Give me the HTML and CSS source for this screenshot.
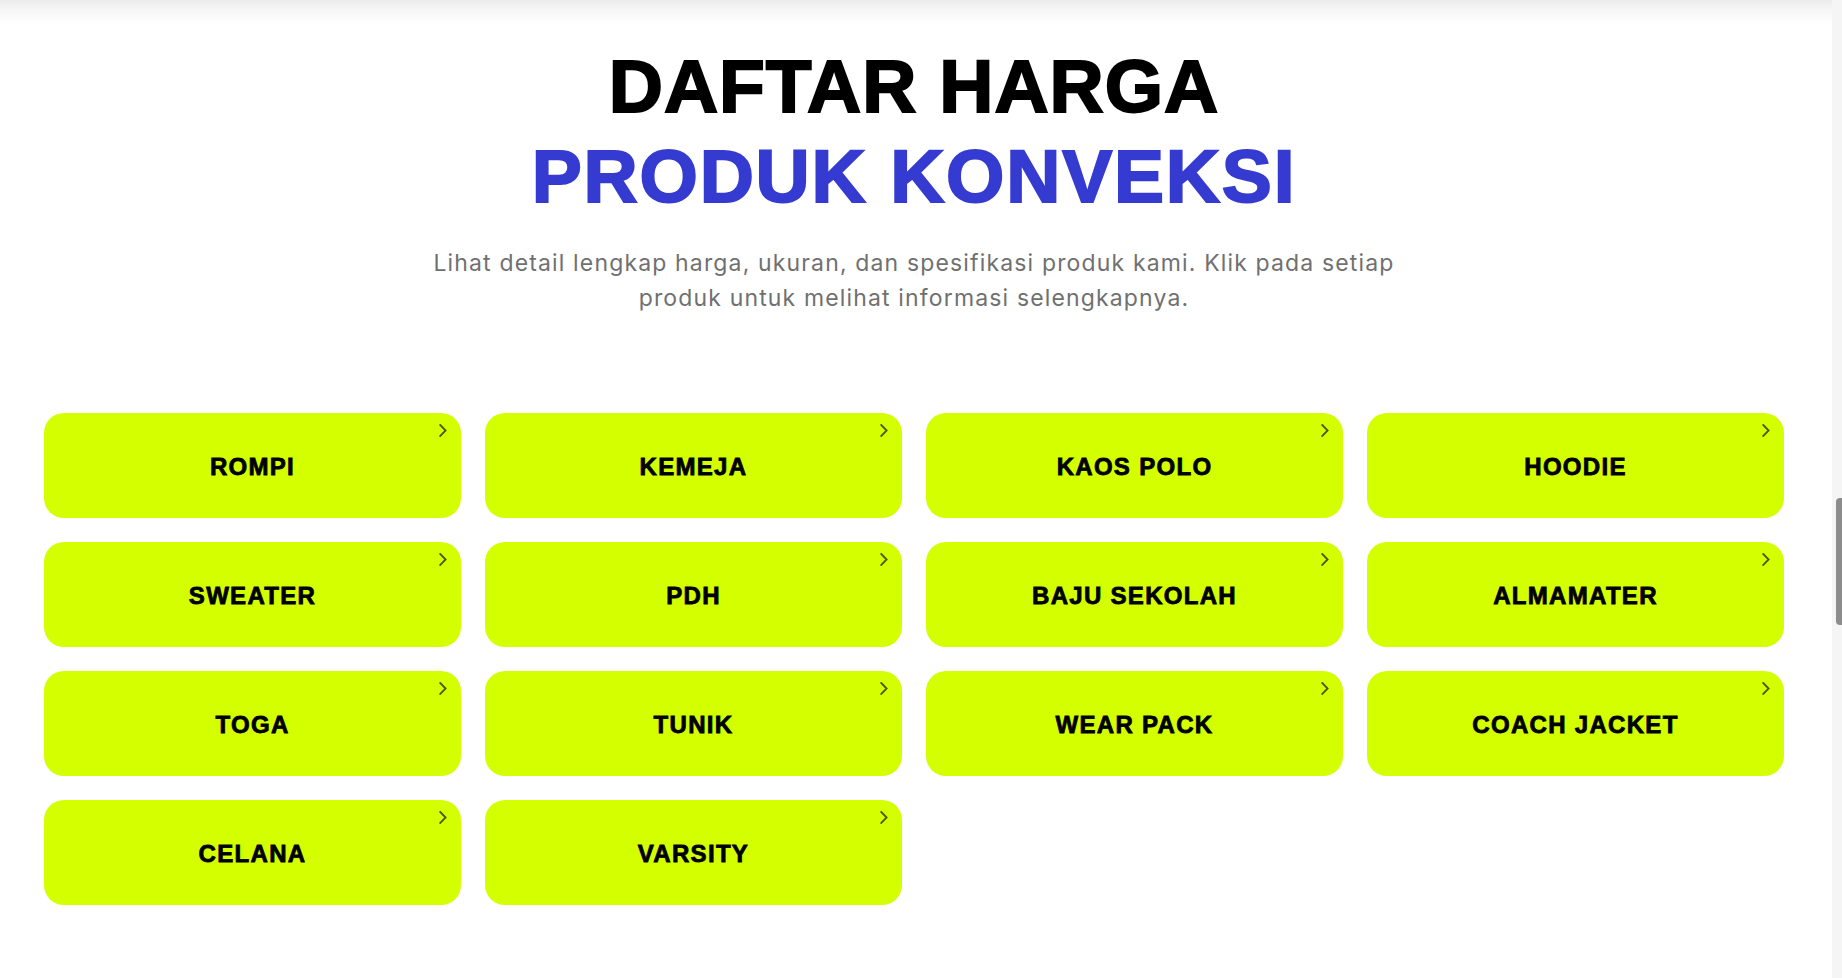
FILE: index.html
```html
<!DOCTYPE html>
<html lang="id">
<head>
<meta charset="utf-8">
<title>Daftar Harga Produk Konveksi</title>
<link rel="stylesheet" href="styles.css">
</head>
<body>
<div class="layout">
  <main class="page">
    <header class="intro">
      <h1 class="title">
        <span class="title-line">DAFTAR HARGA</span>
        <span class="title-line title-accent">PRODUK KONVEKSI</span>
      </h1>
      <p class="lead">Lihat detail lengkap harga, ukuran, dan spesifikasi produk kami. Klik pada setiap produk untuk melihat informasi selengkapnya.</p>
    </header>

    <section class="grid">
      <a class="card" href="#"><span class="card-label">ROMPI</span><svg class="chev" viewBox="0 0 8 13"><path d="M1.2 1 L6.6 6.5 L1.2 12"/></svg></a>
      <a class="card" href="#"><span class="card-label">KEMEJA</span><svg class="chev" viewBox="0 0 8 13"><path d="M1.2 1 L6.6 6.5 L1.2 12"/></svg></a>
      <a class="card" href="#"><span class="card-label">KAOS POLO</span><svg class="chev" viewBox="0 0 8 13"><path d="M1.2 1 L6.6 6.5 L1.2 12"/></svg></a>
      <a class="card" href="#"><span class="card-label">HOODIE</span><svg class="chev" viewBox="0 0 8 13"><path d="M1.2 1 L6.6 6.5 L1.2 12"/></svg></a>
      <a class="card" href="#"><span class="card-label">SWEATER</span><svg class="chev" viewBox="0 0 8 13"><path d="M1.2 1 L6.6 6.5 L1.2 12"/></svg></a>
      <a class="card" href="#"><span class="card-label">PDH</span><svg class="chev" viewBox="0 0 8 13"><path d="M1.2 1 L6.6 6.5 L1.2 12"/></svg></a>
      <a class="card" href="#"><span class="card-label">BAJU SEKOLAH</span><svg class="chev" viewBox="0 0 8 13"><path d="M1.2 1 L6.6 6.5 L1.2 12"/></svg></a>
      <a class="card" href="#"><span class="card-label">ALMAMATER</span><svg class="chev" viewBox="0 0 8 13"><path d="M1.2 1 L6.6 6.5 L1.2 12"/></svg></a>
      <a class="card" href="#"><span class="card-label">TOGA</span><svg class="chev" viewBox="0 0 8 13"><path d="M1.2 1 L6.6 6.5 L1.2 12"/></svg></a>
      <a class="card" href="#"><span class="card-label">TUNIK</span><svg class="chev" viewBox="0 0 8 13"><path d="M1.2 1 L6.6 6.5 L1.2 12"/></svg></a>
      <a class="card" href="#"><span class="card-label">WEAR PACK</span><svg class="chev" viewBox="0 0 8 13"><path d="M1.2 1 L6.6 6.5 L1.2 12"/></svg></a>
      <a class="card" href="#"><span class="card-label">COACH JACKET</span><svg class="chev" viewBox="0 0 8 13"><path d="M1.2 1 L6.6 6.5 L1.2 12"/></svg></a>
      <a class="card" href="#"><span class="card-label">CELANA</span><svg class="chev" viewBox="0 0 8 13"><path d="M1.2 1 L6.6 6.5 L1.2 12"/></svg></a>
      <a class="card" href="#"><span class="card-label">VARSITY</span><svg class="chev" viewBox="0 0 8 13"><path d="M1.2 1 L6.6 6.5 L1.2 12"/></svg></a>
    </section>
  </main>

  <aside class="scrollbar" aria-hidden="true">
    <div class="scroll-thumb"></div>
  </aside>
</div>
</body>
</html>
```

FILE: styles.css
```css
* {
  box-sizing: border-box;
}

html, body {
  margin: 0;
  padding: 0;
  height: 100%;
  overflow: hidden;
}

body {
  background: #ffffff linear-gradient(to bottom, #ebebeb 0px, #f6f6f6 10px, #ffffff 24px) no-repeat;
  font-family: "Liberation Sans", Arial, sans-serif;
  color: #000;
}

.layout {
  display: flex;
  height: 978px;
}

.page {
  flex: 1;
  padding: 41px 48px 0 44px;
}

.intro {
  display: flex;
  flex-direction: column;
  align-items: center;
  text-align: center;
}

.title {
  margin: 0;
  display: flex;
  flex-direction: column;
  align-items: center;
  font-family: "Liberation Sans", Arial, sans-serif;
  font-weight: 700;
  font-size: 75px;
  line-height: 90px;
  letter-spacing: 1px;
  color: #000;
  -webkit-text-stroke: 2px currentColor;
}

.title-accent {
  color: #353bd0;
  letter-spacing: 1.8px;
}

.lead {
  margin: 25px 0 0;
  max-width: 1000px;
  font-family: Inter, "Open Sans", sans-serif;
  font-size: 23px;
  font-weight: 400;
  line-height: 35px;
  letter-spacing: 1.15px;
  color: #707070;
}

.grid {
  margin-top: 97px;
  display: grid;
  grid-template-columns: repeat(4, 1fr);
  gap: 24px;
}

.card {
  position: relative;
  height: 105px;
  display: flex;
  align-items: center;
  justify-content: center;
  padding-top: 3px;
  background: #d4ff00;
  border-radius: 20px;
  text-decoration: none;
  color: #000;
}

.card-label {
  font-family: "Liberation Sans", Arial, sans-serif;
  font-weight: 700;
  font-size: 24px;
  letter-spacing: 1.3px;
  -webkit-text-stroke: 0.8px currentColor;
}

.chev {
  position: absolute;
  top: 11px;
  right: 14px;
  width: 8px;
  height: 13px;
  fill: none;
  stroke: #4b5500;
  stroke-width: 1.8;
  stroke-linecap: square;
}

.scrollbar {
  width: 10px;
  flex: none;
  background: #f5f5f5;
  display: flex;
  justify-content: flex-end;
}

.scroll-thumb {
  margin-top: 498px;
  width: 6px;
  height: 127px;
  background: #8c8c8c;
  border-radius: 4px 0 0 4px;
}
```
